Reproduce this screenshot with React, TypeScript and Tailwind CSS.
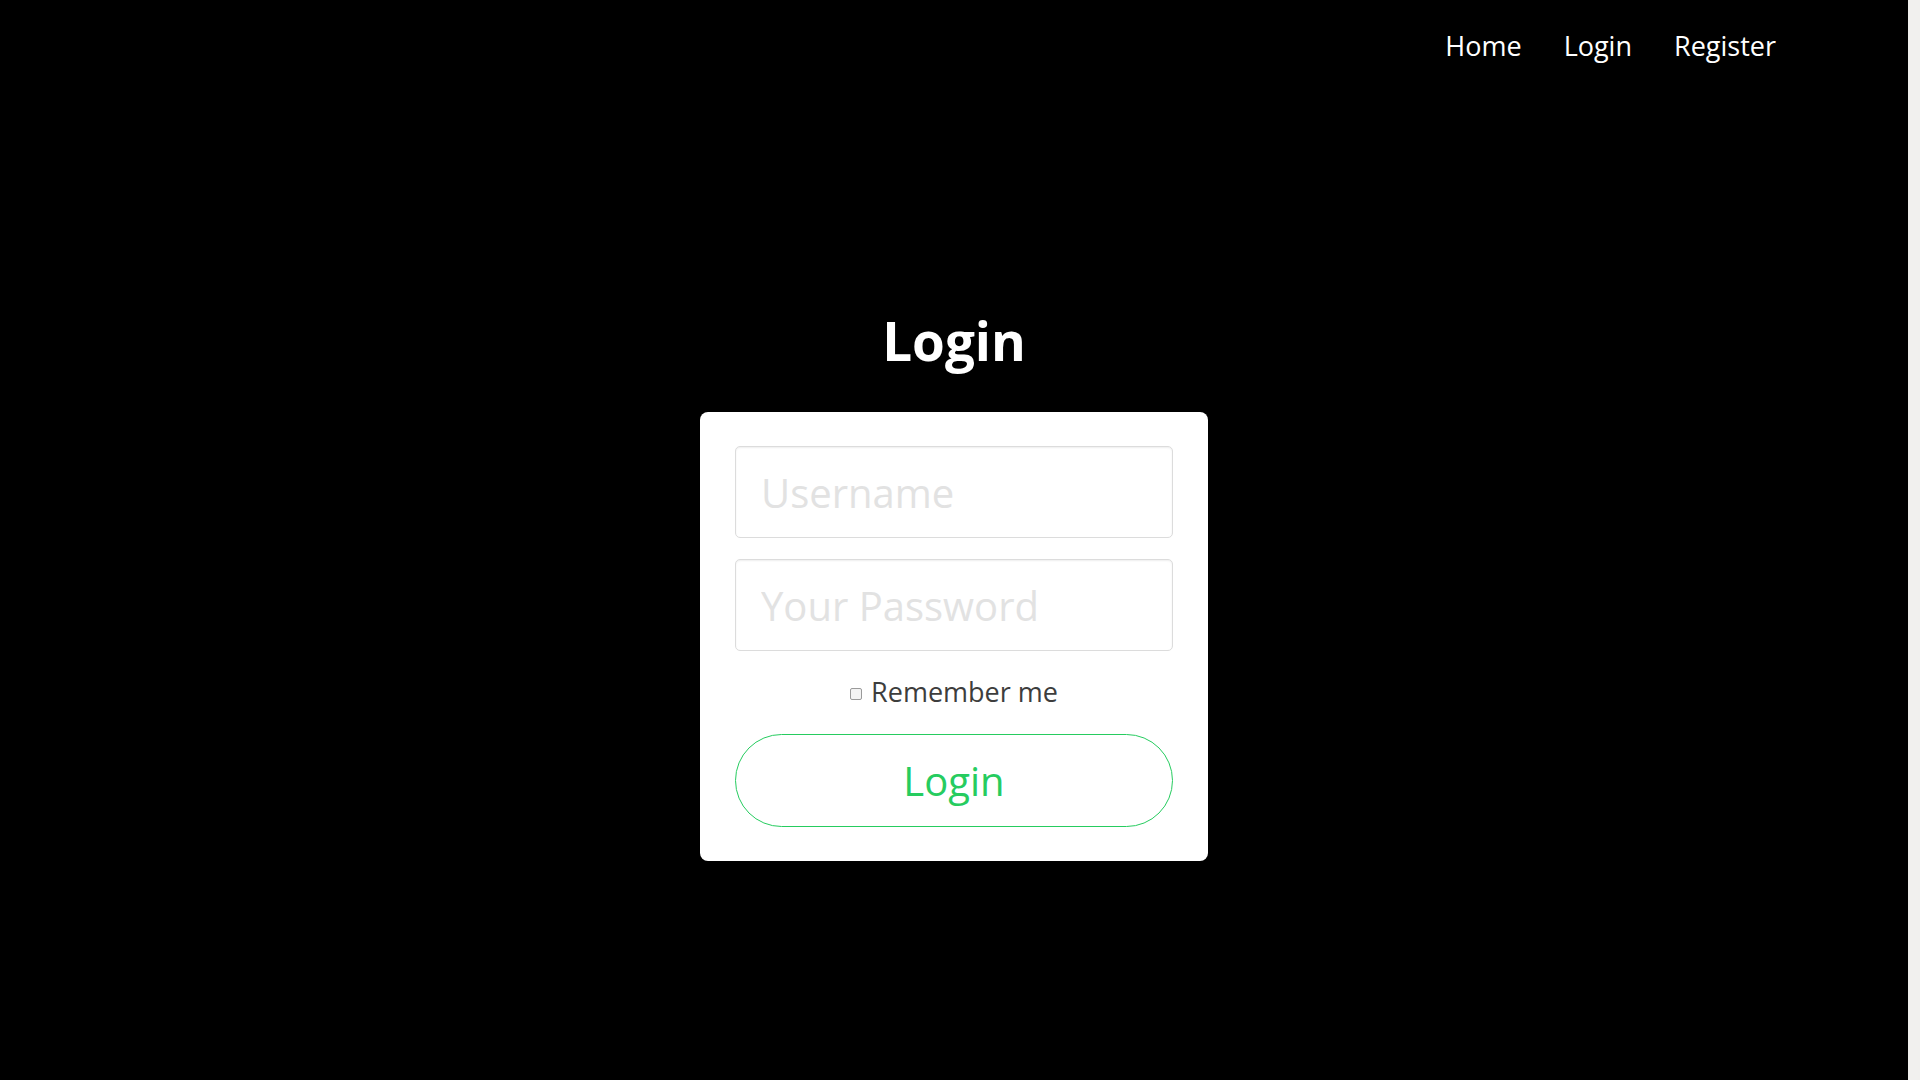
import React from 'react';

const navLinks = ['Home', 'Login', 'Register'];

const LoginCard: React.FC = () => {
  return (
    <form
      onSubmit={(e) => e.preventDefault()}
      className="mt-[45px] flex w-[508px] flex-col rounded-[8px] bg-white px-[35px] py-[34px]"
    >
      <input
        type="text"
        placeholder="Username"
        className="h-[92px] w-full rounded-[5px] border border-[#dcdcdc] px-[25px] text-[40px] text-[#444] shadow-[inset_0_1px_2px_rgba(0,0,0,0.07)] outline-none placeholder:text-[#e2e2e2]"
      />
      <input
        type="password"
        placeholder="Your Password"
        className="mt-[21px] h-[92px] w-full rounded-[5px] border border-[#dcdcdc] px-[25px] text-[40px] text-[#444] shadow-[inset_0_1px_2px_rgba(0,0,0,0.07)] outline-none placeholder:text-[#e2e2e2]"
      />
      <label className="flex h-[83px] items-center justify-center gap-[9px] text-[27px] text-[#3d3d3d]">
        <input
          type="checkbox"
          className="mt-[3px] h-[12px] w-[12px] appearance-none rounded-[2px] border border-[#9a9a9a] bg-[#f3f3f3]"
        />
        <span>Remember me</span>
      </label>
      <button
        type="submit"
        className="h-[93px] w-full rounded-full border border-[#26cc5f] bg-white text-[40px] text-[#26cc5f]"
      >
        Login
      </button>
    </form>
  );
};

const App: React.FC = () => {
  return (
    <div className="flex h-screen w-full font-['Open_Sans',sans-serif]">
      <main className="flex flex-1 flex-col items-center bg-black">
        <nav className="flex w-full justify-end gap-[42px] pr-[132px] pt-[30px]">
          {navLinks.map((link) => (
            <a key={link} href="#" className="text-[27px] leading-[32px] text-white">
              {link}
            </a>
          ))}
        </nav>
        <h1 className="mt-[252px] text-[53px] font-bold leading-none text-white">Login</h1>
        <LoginCard />
      </main>
      <div className="w-[12px] bg-[#f1f0ee]" />
    </div>
  );
};

export default App;
